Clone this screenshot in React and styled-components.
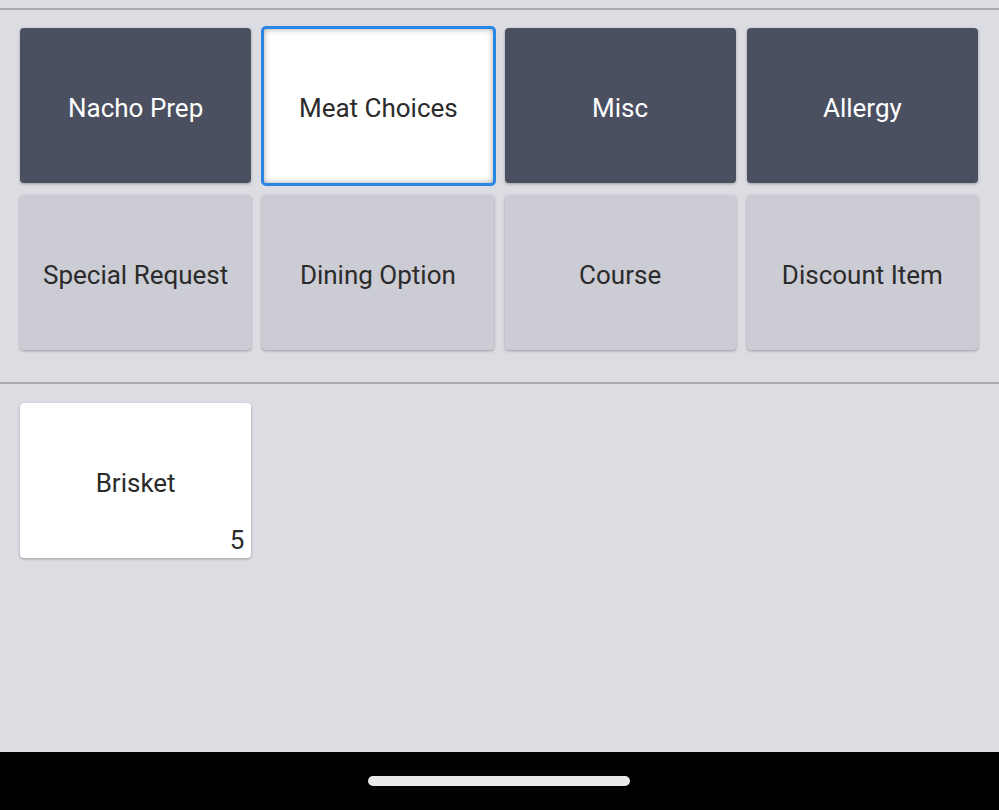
import React from "react";
import styled, { createGlobalStyle } from "styled-components";

const GlobalStyle = createGlobalStyle`
  html, body {
    margin: 0;
    padding: 0;
    background: #dcdde2;
    font-family: Roboto, "Noto Sans", sans-serif;
  }
`;

const Screen = styled.div`
  width: 999px;
  height: 810px;
  display: flex;
  flex-direction: column;
  background: #dcdde2;
  overflow: hidden;
`;

const Divider = styled.div`
  height: 2px;
  background: #a9aab1;
  margin-top: ${(p) => p.top}px;
`;

const Grid = styled.div`
  display: grid;
  grid-template-columns: repeat(4, 1fr);
  column-gap: 11px;
  row-gap: 12px;
  padding: ${(p) => p.pad};
`;

const Tile = styled.button`
  height: 155px;
  border: none;
  border-radius: 4px;
  font-family: Roboto, "Noto Sans", sans-serif;
  font-size: 26px;
  font-weight: 400;
  position: relative;
  display: flex;
  align-items: center;
  justify-content: center;
  padding: 4px 0 0;
  box-shadow: 0 1px 3px rgba(0, 0, 0, 0.3);
  background: ${(p) =>
    p.kind === "dark" ? "#4b5060" : p.kind === "light" ? "#cbccd4" : "#ffffff"};
  color: ${(p) => (p.kind === "dark" ? "#ffffff" : "#2b2b2b")};
`;

const SelectedTile = styled(Tile)`
  margin: -2px -2px -3px -1px;
  height: 160px;
  border: 3px solid #2a86e3;
  border-radius: 5px;
  box-shadow: inset 0 0 6px rgba(0, 0, 0, 0.35);
`;

const Count = styled.span`
  position: absolute;
  right: 7px;
  bottom: 3px;
  font-size: 26px;
  color: #2b2b2b;
`;

const Spacer = styled.div`
  flex: 1;
`;

const NavBar = styled.div`
  height: 58px;
  background: #000;
  display: flex;
  align-items: center;
  justify-content: center;
`;

const HomePill = styled.div`
  width: 262px;
  height: 10px;
  border-radius: 5px;
  background: #e9e9e9;
  margin-left: -2px;
`;

const groups = [
  { label: "Nacho Prep", kind: "dark" },
  { label: "Meat Choices", kind: "white", selected: true },
  { label: "Misc", kind: "dark" },
  { label: "Allergy", kind: "dark" },
  { label: "Special Request", kind: "light" },
  { label: "Dining Option", kind: "light" },
  { label: "Course", kind: "light" },
  { label: "Discount Item", kind: "light" },
];

export default function App() {
  return (
    <>
      <GlobalStyle />
      <Screen>
        <Divider top={8} />
        <Grid pad="18px 21px 0 20px">
          {groups.map((g) =>
            g.selected ? (
              <SelectedTile key={g.label} kind={g.kind}>
                {g.label}
              </SelectedTile>
            ) : (
              <Tile key={g.label} kind={g.kind}>
                {g.label}
              </Tile>
            )
          )}
        </Grid>
        <Divider top={32} />
        <Grid pad="19px 21px 0 20px">
          <Tile kind="white">
            Brisket
            <Count>5</Count>
          </Tile>
        </Grid>
        <Spacer />
        <NavBar>
          <HomePill />
        </NavBar>
      </Screen>
    </>
  );
}
